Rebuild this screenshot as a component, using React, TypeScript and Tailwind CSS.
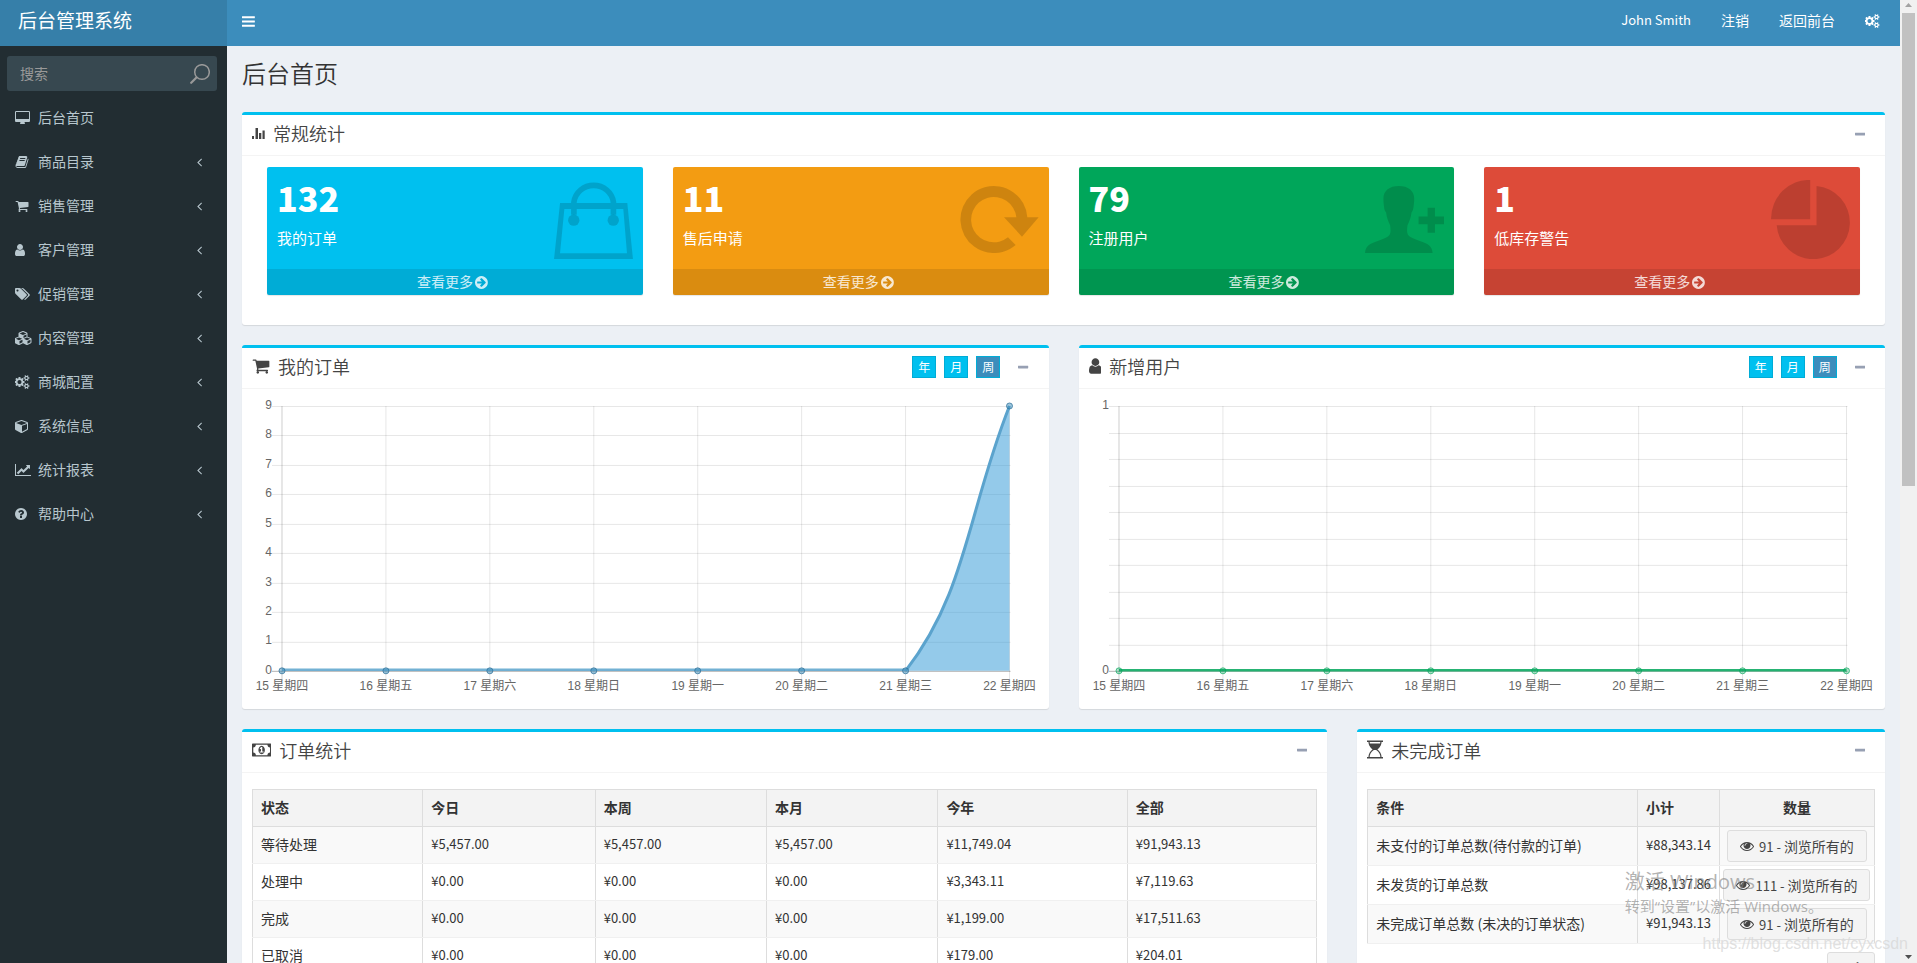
import type { ReactNode } from "react";

const icons = {
  bars: {
    w: 1536,
    d: "M1536 1344v128q0 26-19 45t-45 19h-1408q-26 0-45-19t-19-45v-128q0-26 19-45t45-19h1408q26 0 45 19t19 45zm0-512v128q0 26-19 45t-45 19h-1408q-26 0-45-19t-19-45v-128q0-26 19-45t45-19h1408q26 0 45 19t19 45zm0-512v128q0 26-19 45t-45 19h-1408q-26 0-45-19t-19-45v-128q0-26 19-45t45-19h1408q26 0 45 19t19 45z",
  },
  desktop: {
    w: 1920,
    d: "M1792 992v-832q0-13-9.5-22.5t-22.5-9.5h-1600q-13 0-22.5 9.5t-9.5 22.5v832q0 13 9.5 22.5t22.5 9.5h1600q13 0 22.5-9.5t9.5-22.5zm128-832v1088q0 66-47 113t-113 47h-544q0 37 16 77.5t32 71 16 43.5q0 26-19 45t-45 19h-512q-26 0-45-19t-19-45q0-14 16-44t32-70 16-78h-544q-66 0-113-47t-47-113v-1088q0-66 47-113t113-47h1600q66 0 113 47t47 113z",
  },
  book: {
    w: 1792,
    d: "M1703 478q40 57 18 129l-275 906q-19 64-76.5 107.5t-122.5 43.5h-923q-77 0-148.5-53.5t-99.5-131.5q-24-67-2-127 0-4 3-27t4-37q1-8-3-21.5t-3-19.5q2-11 8-21t16.5-23.5 16.5-23.5q23-38 45-91.5t30-91.5q3-10 .5-30t-.5-28q3-11 17-28t17-23q21-36 42-92t25-90q1-9-2.5-32t.5-28q4-13 22-30.5t22-22.5q19-26 42.5-84.5t27.5-96.5q1-8-3-25.5t-2-26.5q2-8 9-18t18-23 17-21q8-12 16.5-30.5t15-35 16-36 19.5-32 26.5-23.5 36-11.5 47.5 5.5l-1 3q38-9 51-9h761q74 0 114 56t18 130l-274 906q-36 119-71.5 153.5t-128.5 34.5h-869q-27 0-38 15-11 16-1 43 24 70 144 70h923q29 0 56-15.5t35-41.5l300-987q7-22 5-57 38 15 59 43zm-1064 2q-4 13 2 22.5t20 9.5h608q13 0 25.5-9.5t16.5-22.5l21-64q4-13-2-22.5t-20-9.5h-608q-13 0-25.5 9.5t-16.5 22.5zm-83 256q-4 13 2 22.5t20 9.5h608q13 0 25.5-9.5t16.5-22.5l21-64q4-13-2-22.5t-20-9.5h-608q-13 0-25.5 9.5t-16.5 22.5z",
  },
  cart: {
    w: 1792,
    d: "M704 1536q0 52-38 90t-90 38-90-38-38-90 38-90 90-38 90 38 38 90zm896 0q0 52-38 90t-90 38-90-38-38-90 38-90 90-38 90 38 38 90zm128-1088v512q0 24-16.5 42.5t-40.5 21.5l-1044 122q13 60 13 70 0 16-24 64h920q26 0 45 19t19 45-19 45-45 19h-1024q-26 0-45-19t-19-45q0-11 8-31.5t16-36 21.5-40 15.5-29.5l-177-823h-204q-26 0-45-19t-19-45 19-45 45-19h256q16 0 28.5 6.5t19.5 15.5 13 24.5 8 26 5.5 29.5 4.5 26h1201q26 0 45 19t19 45z",
  },
  user: {
    w: 1280,
    d: "M1280 1399q0 109-62.5 187t-150.5 78h-854q-88 0-150.5-78t-62.5-187q0-85 8.5-160.5t31.5-152 58.5-131 94-89 134.5-34.5q131 128 313 128t313-128q76 0 134.5 34.5t94 89 58.5 131 31.5 152 8.5 160.5zm-256-887q0 159-112.5 271.5t-271.5 112.5-271.5-112.5-112.5-271.5 112.5-271.5 271.5-112.5 271.5 112.5 112.5 271.5z",
  },
  tags: {
    w: 1920,
    d: "M448 448q0-53-37.5-90.5t-90.5-37.5-90.5 37.5-37.5 90.5 37.5 90.5 90.5 37.5 90.5-37.5 37.5-90.5zm1067 576q0 53-37 90l-491 492q-39 37-91 37-53 0-90-37l-715-716q-38-37-64.5-101t-26.5-117v-416q0-52 38-90t90-38h416q53 0 117 26.5t102 64.5l715 714q37 39 37 91zm384 0q0 53-37 90l-491 492q-39 37-91 37-36 0-59-14t-53-45l470-470q37-37 37-90 0-52-37-91l-715-714q-38-38-102-64.5t-117-26.5h224q53 0 117 26.5t102 64.5l715 714q37 39 37 91z",
  },
  cubes: {
    w: 2176,
    d: "M576 1632l384-192v-314l-384 164v342zm-64-454l404-173-404-173-404 173zm1088 454l384-192v-314l-384 164v342zm-64-454l404-173-404-173-404 173zm-448-293l384-165v-266l-384 164v267zm-64-379l441-189-441-189-441 189zm1088 518v416q0 36-19 67t-52 47l-448 224q-25 14-57 14t-57-14l-448-224q-4-2-7-4-2 2-7 4l-448 224q-25 14-57 14t-57-14l-448-224q-33-16-52-47t-19-67v-416q0-38 21.500-70t56.500-48l434-186v-400q0-38 21.500-70t56.500-48l448-192q23-10 50-10t50 10l448 192q35 16 56.500 48t21.500 70v400l434 186q36 16 57 48t21 70z",
  },
  cogs: {
    w: 1920,
    d: "M832 896q0-106-75-181t-181-75-181 75-75 181 75 181 181 75 181-75 75-181zm768 512q0-52-38-90t-90-38-90 38-38 90q0 53 37.5 90.5t90.5 37.5 90.5-37.5 37.5-90.5zm0-1024q0-52-38-90t-90-38-90 38-38 90q0 53 37.5 90.5t90.5 37.5 90.5-37.5 37.5-90.5zm-384 421v185q0 10-7 19.5t-16 10.5l-155 24q-11 35-32 76 34 48 90 115 7 11 7 20 0 12-7 19-23 30-82.5 89.5t-78.5 59.5q-11 0-21-7l-115-90q-37 19-77 31-11 108-23 155-7 24-30 24h-186q-11 0-20-7.5t-10-17.5l-23-153q-34-10-75-31l-118 89q-7 7-20 7-11 0-21-8-144-133-144-160 0-9 7-19 10-14 41-53t47-61q-23-44-35-82l-152-24q-10-1-17-9.5t-7-19.5v-185q0-10 7-19.5t16-10.5l155-24q11-35 32-76-34-48-90-115-7-11-7-20 0-12 7-20 22-30 82-89t79-59q11 0 21 7l115 90q34-18 77-32 11-108 23-154 7-24 30-24h186q11 0 20 7.5t10 17.5l23 153q34 10 75 31l118-89q8-7 20-7 11 0 21 8 144 133 144 160 0 8-7 19-12 16-42 54t-45 60q23 48 34 82l152 23q10 2 17 10.5t7 19.5zm640 533v140q0 16-149 31-12 27-30 52 51 113 51 138 0 4-4 7-122 71-124 71-8 0-46-47t-52-68q-20 2-30 2t-30-2q-14 21-52 68t-46 47q-2 0-124-71-4-3-4-7 0-25 51-138-18-25-30-52-149-15-149-31v-140q0-16 149-31 13-29 30-52-51-113-51-138 0-4 4-7 4-2 35-20t59-34 30-16q8 0 46 46.5t52 67.5q20-2 30-2t30 2q51-71 92-112l6-2q4 0 124 70 4 3 4 7 0 25-51 138 17 23 30 52 149 15 149 31zm0-1024v140q0 16-149 31-12 27-30 52 51 113 51 138 0 4-4 7-122 71-124 71-8 0-46-47t-52-68q-20 2-30 2t-30-2q-14 21-52 68t-46 47q-2 0-124-71-4-3-4-7 0-25 51-138-18-25-30-52-149-15-149-31v-140q0-16 149-31 13-29 30-52-51-113-51-138 0-4 4-7 4-2 35-20t59-34 30-16q8 0 46 46.5t52 67.5q20-2 30-2t30 2q51-71 92-112l6-2q4 0 124 70 4 3 4 7 0 25-51 138 17 23 30 52 149 15 149 31z",
  },
  cube: {
    w: 1664,
    d: "M896 1629l640-349v-636l-640 233v752zm-64-865l698-254-698-254-698 254zm832-252v768q0 35-18 65t-49 47l-704 384q-28 16-61 16t-61-16l-704-384q-31-17-49-47t-18-65v-768q0-40 23-73t61-47l704-256q22-8 44-8t44 8l704 256q38 14 61 47t23 73z",
  },
  chart: {
    w: 2048,
    d: "M2048 1536v128h-2048v-1536h128v1408h1920zm-128-1248v435q0 21-19.5 29.5t-35.5-7.5l-121-121-633 633q-10 10-23 10t-23-10l-233-233-416 416-192-192 585-585q10-10 23-10t23 10l233 233 464-464-121-121q-16-16-7.5-35.5t29.5-19.5h435q14 0 23 9t9 23z",
  },
  help: {
    w: 1536,
    d: "M896 1376v-192q0-14-9-23t-23-9h-192q-14 0-23 9t-9 23v192q0 14 9 23t23 9h192q14 0 23-9t9-23zm256-672q0-88-55.5-163t-138.500-116-170-41q-243 0-371 213-15 24 8 42l132 100q7 6 19 6 16 0 25-12 53-68 86-92 34-24 86-24 48 0 85.500 26t37.500 59q0 38-20 61t-68 45q-63 28-115.500 86.500t-52.500 125.500v36q0 14 9 23t23 9h192q14 0 23-9t9-23q0-19 21.500-49.500t54.500-49.500q32-18 49-28.500t46-35 44.500-48 28-60.500 12.500-81zm384 192q0 209-103 385.500t-279.500 279.500-385.500 103-385.500-103-279.500-279.500-103-385.500 103-385.500 279.500-279.500 385.500-103 385.500 103 279.500 279.500 103 385.500z",
  },
  angle: {
    w: 640,
    d: "M627 544q0 13-10 23l-393 393 393 393q10 10 10 23t-10 23l-50 50q-10 10-23 10t-23-10l-466-466q-10-10-10-23t10-23l466-466q10-10 23-10t23 10l50 50q10 10 10 23z",
  },
  arrow: {
    w: 1536,
    d: "M1285 896q0-27-18-45l-362-362-91-91q-18-18-45-18t-45 18l-91 91q-18 18-18 45t18 45l189 189h-502q-26 0-45 19t-19 45v128q0 26 19 45t45 19h502l-189 189q-19 19-19 45t19 45l91 91q18 18 45 18t45-18l362-362 91-91q18-18 18-45zm251 0q0 209-103 385.500t-279.500 279.500-385.500 103-385.500-103-279.500-279.500-103-385.500 103-385.500 279.500-279.500 385.500-103 385.500 103 279.500 279.500 103 385.500z",
  },
  eye: {
    w: 1792,
    d: "M1664 960q-152-236-381-353 61 104 61 225 0 185-131.5 316.5t-316.5 131.5-316.5-131.5-131.5-316.5q0-121 61-225-229 117-381 353 133 205 333.5 326.5t434.5 121.5 434.5-121.5 333.5-326.5zm-720-384q0-20-14-34t-34-14q-125 0-214.5 89.5t-89.5 214.5q0 20 14 34t34 14 34-14 14-34q0-86 61-147t147-61q20 0 34-14t14-34zm848 384q0 34-20 69-140 230-376.5 368.5t-499.5 138.5-499.5-139-376.5-368q-20-35-20-69t20-69q140-229 376.5-368t499.5-139 499.5 139 376.5 368q20 35 20 69z",
  },
  minus: {
    w: 1408,
    d: "M1408 736v192q0 40-28 68t-68 28h-1216q-40 0-68-28t-28-68v-192q0-40 28-68t68-28h1216q40 0 68 28t28 68z",
  },
  money: {
    w: 1920,
    d: "M768 1152h384v-96h-128v-448h-114l-148 137 77 80q42-37 55-57h2v288h-128v96zm512-256q0 70-21 142t-59.5 134-101.5 101-138 39-138-39-101.5-101-59.5-134-21-142 21-142 59.5-134 101.5-101 138-39 138 39 101.5 101 59.5 134 21 142zm512 256v-512q-106 0-181-75t-75-181h-1152q0 106-75 181t-181 75v512q106 0 181 75t75 181h1152q0-106 75-181t181-75zm128-832v1152q0 26-19 45t-45 19h-1792q-26 0-45-19t-19-45v-1152q0-26 19-45t45-19h1792q26 0 45 19t19 45z",
  },
};

type IconName = keyof typeof icons;

function Icon({ name, className = "h-[14px]" }: { name: IconName; className?: string }) {
  const { w, d } = icons[name];
  return (
    <svg viewBox={`0 0 ${w} 1792`} className={`w-auto shrink-0 ${className}`} fill="currentColor" aria-hidden="true">
      <path d={d} />
    </svg>
  );
}

function BarsIcon() {
  return (
    <svg viewBox="0 0 13 12" className="h-3 w-[13px]" fill="currentColor" aria-hidden="true">
      <path d="M0 9h2v3H0zM3.500 1h2.500v11H3.500zM7 6h2.300v6H7zM10.500 3.500h2.200v8.500h-2.200z" />
    </svg>
  );
}

function HourglassIcon() {
  return (
    <svg viewBox="0 0 16 19" className="h-[19px] w-4" fill="none" stroke="currentColor" aria-hidden="true">
      <path d="M0 1.200h16M0 17.800h16" strokeWidth="1.600" />
      <path d="M2 1.500c0 4 2.300 6.300 4.500 8C4.300 11 2 13.500 2 17.500M14 1.500c0 4-2.300 6.300-4.500 8 2.200 1.500 4.500 4 4.500 8" strokeWidth="1.200" />
      <path d="M2.300 3.500h11.400c-.5 3.200-2.300 5-4.500 6.500H6.800c-2.200-1.500-4-3.300-4.500-6.500z" fill="currentColor" stroke="none" />
    </svg>
  );
}

function BagIcon() {
  return (
    <svg viewBox="972 240 236 237" className="w-[79px]" aria-hidden="true">
      <path fill="currentColor" fillRule="evenodd" d="M990 309h201l17 168H972zM1003 327l-13 132h200l-11-132z" />
      <path fill="none" stroke="currentColor" strokeWidth="17" d="M1031.500 309v-3a59.500 57.500 0 0 1 118 0v3M1031.500 327v17M1149.500 327v17" />
      <circle cx="1031" cy="360" r="17" fill="currentColor" />
      <circle cx="1149" cy="360" r="17" fill="currentColor" />
    </svg>
  );
}

function RefreshIcon() {
  return (
    <svg viewBox="899 107 237 203" className="w-[79px]" aria-hidden="true">
      <path fill="currentColor" d="M1101 201h34l-50 58-54-58h37A68 68 0 1 0 1043 261L1066 284A100.500 100.500 0 1 1 1101 201z" />
    </svg>
  );
}

function PersonAddIcon() {
  return (
    <svg viewBox="917 106 236 203" className="w-[79px]" fill="currentColor" aria-hidden="true">
      <path d="M1018 106c28 0 46 14 46 38 0 10-1 16-2 25-1 6-2 12-6 16-2 16-6 26-12 38-1 10-3 20 1 28 5 9 20 13 36 19 24 9 38 14 38 39H917c0-25 14-30 38-39 16-6 31-10 36-19 4-8 2-18 1-28-6-12-10-22-12-38-4-4-6-10-6-16-1-9-2-15-2-25 0-24 18-38 46-38z" />
      <path d="M1104 171h22v26h27v23h-27v26h-22v-26h-27v-23h27z" />
    </svg>
  );
}

function PieIcon() {
  return (
    <svg viewBox="875 540 236 237" className="w-[79px]" fill="currentColor" aria-hidden="true">
      <path d="M992 540v117H875A112 117 0 0 1 992 540z" />
      <path d="M1011 558A109.500 109.500 0 1 1 892 675h119z" />
    </svg>
  );
}

const menu: { icon: IconName; label: string }[] = [
  { icon: "desktop", label: "后台首页" },
  { icon: "book", label: "商品目录" },
  { icon: "cart", label: "销售管理" },
  { icon: "user", label: "客户管理" },
  { icon: "tags", label: "促销管理" },
  { icon: "cubes", label: "内容管理" },
  { icon: "cogs", label: "商城配置" },
  { icon: "cube", label: "系统信息" },
  { icon: "chart", label: "统计报表" },
  { icon: "help", label: "帮助中心" },
];

function Sidebar() {
  return (
    <aside className="flex w-[227px] shrink-0 flex-col bg-[#222d32] text-[#b8c7ce]">
      <a href="#" className="flex h-[46px] shrink-0 items-center bg-[#367fa9] px-[18px] pb-[6px] text-[19px] text-white">
        后台管理系统
      </a>
      <form className="mt-[10px] mr-[10px] ml-[7px] flex h-[35px] shrink-0 items-center rounded-[3px] bg-[#374850] pr-[7px]">
        <input
          type="text"
          aria-label="搜索"
          placeholder="搜索"
          className="h-full min-w-0 flex-1 bg-transparent px-[13px] pb-[2px] text-sm outline-none placeholder:text-[#999]"
        />
        <button type="button" aria-label="搜索" className="text-[#999]">
          <svg viewBox="0 0 20 20" className="size-5" fill="none" stroke="currentColor" aria-hidden="true">
            <circle cx="12" cy="8" r="7.300" strokeWidth="1.500" />
            <path d="M6.500 13.500L1.200 18.800" strokeWidth="2.200" strokeLinecap="round" />
          </svg>
        </button>
      </form>
      <nav className="mt-[5px]">
        <ul>
          {menu.map((item, i) => (
            <li key={item.label}>
              <a href="#" className="flex h-11 items-center pr-[25px] pl-[15px] text-sm">
                <span className="flex w-[23px] shrink-0">
                  <Icon name={item.icon} />
                </span>
                <span className="flex-1 pb-[2px]">{item.label}</span>
                {i > 0 && <Icon name="angle" />}
              </a>
            </li>
          ))}
        </ul>
      </nav>
    </aside>
  );
}

function Panel({ icon, title, tools, children }: { icon: ReactNode; title: string; tools?: ReactNode; children: ReactNode }) {
  return (
    <section className="rounded-[3px] border-t-[3px] border-[#00c0ef] bg-white shadow-[0_1px_1px_rgba(0,0,0,0.1)]">
      <header className="flex h-[41px] items-center justify-between border-b border-[#f4f4f4] px-[10px] text-[#444]">
        <h3 className="flex items-center gap-2 pb-1 text-lg leading-5 font-[350]">
          {icon}
          {title}
        </h3>
        <div className="flex items-center gap-2 pb-[2px]">
          {tools}
          <button type="button" aria-label="收起" className="px-[10px] text-[#97a0b3]">
            <Icon name="minus" className="h-[13px]" />
          </button>
        </div>
      </header>
      {children}
    </section>
  );
}

const stats = [
  { value: "132", label: "我的订单", color: "bg-[#00c0ef]", icon: <BagIcon /> },
  { value: "11", label: "售后申请", color: "bg-[#f39c12]", icon: <RefreshIcon /> },
  { value: "79", label: "注册用户", color: "bg-[#00a65a]", icon: <PersonAddIcon /> },
  { value: "1", label: "低库存警告", color: "bg-[#dd4b39]", icon: <PieIcon /> },
];

function StatCards() {
  return (
    <div className="grid grid-cols-4 gap-[30px] px-[25px] pt-[11px] pb-[30px]">
      {stats.map((s) => (
        <div key={s.label} className={`overflow-hidden rounded-[2px] text-white shadow-[0_1px_1px_rgba(0,0,0,0.1)] ${s.color}`}>
          <div className="flex h-[102px] items-center justify-between px-[10px]">
            <div className="pb-2">
              <p className="text-[34px] leading-[38px] font-extrabold">{s.value}</p>
              <p className="mt-[10px] text-[15px] leading-[22px]">{s.label}</p>
            </div>
            <div className="pt-[3px] text-black/15">{s.icon}</div>
          </div>
          <a href="#" className="flex h-[26px] items-center justify-center gap-[2px] bg-black/10 pr-[5px] text-sm text-white/80">
            <span className="pb-[2px]">查看更多</span>
            <Icon name="arrow" className="h-[15px]" />
          </a>
        </div>
      ))}
    </div>
  );
}

function Periods() {
  return (
    <>
      {["年", "月", "周"].map((p) => (
        <button
          key={p}
          type="button"
          aria-pressed={p === "周"}
          className={`h-[22px] w-6 border border-[#00acd6] text-xs leading-4 text-white ${p === "周" ? "bg-[#3c8dbc]" : "bg-[#00c0ef]"}`}
        >
          {p}
        </button>
      ))}
    </>
  );
}

const days = ["15 星期四", "16 星期五", "17 星期六", "18 星期日", "19 星期一", "20 星期二", "21 星期三", "22 星期四"];
const left = 40;
const top = 7;
const bottom = 272;
const step = 104;
const dayX = (i: number) => left + i * step;

function Chart({
  label,
  divisions,
  ticks,
  children,
}: {
  label: string;
  divisions: number;
  ticks: number[];
  children: ReactNode;
}) {
  const rowY = (i: number) => bottom - ((bottom - top) * i) / divisions;
  return (
    <div className="p-[10px]">
      <svg viewBox="10 0 787 300" className="block w-full font-['Liberation_Sans','Noto_Sans_CJK_SC',sans-serif]" role="img" aria-label={label}>
        {Array.from({ length: divisions + 1 }, (_, i) => (
          <path
            key={i}
            d={`M${left - 10} ${Math.round(rowY(i)) + 0.5}H${dayX(7) + 1}`}
            stroke="#000"
            strokeOpacity={i === 0 ? 0.3 : 0.1}
          />
        ))}
        {days.map((d, i) => (
          <g key={d}>
            <path d={`M${dayX(i)} ${top}V${bottom + 10}`} stroke="#000" strokeOpacity={i === 0 ? 0.2 : 0.1} />
            <text x={dayX(i)} y={bottom + 19} fontSize="12" fill="#666" textAnchor="middle">
              {d}
            </text>
          </g>
        ))}
        {ticks.map((t) => (
          <text key={t} x={left - 10} y={rowY(ticks.length === 2 ? t * divisions : t) + 3} fontSize="12" fill="#666" textAnchor="end">
            {t}
          </text>
        ))}
        {children}
      </svg>
    </div>
  );
}

function OrdersChart() {
  const curve = `M${dayX(6)} ${bottom}C${dayX(6) + 61} 194 ${dayX(7) - 42} 113 ${dayX(7)} ${top}`;
  return (
    <Chart label="我的订单" divisions={9} ticks={[0, 1, 2, 3, 4, 5, 6, 7, 8, 9]}>
      <path d={`${curve}V${bottom}Z`} fill="#2a95d5" fillOpacity="0.5" />
      <path d={`M${dayX(0)} ${bottom - 1}H${dayX(6)}`} stroke="#5ba3cd" strokeWidth="2.500" strokeOpacity="0.85" />
      <path d={curve} fill="none" stroke="#5ba3cd" strokeWidth="3" />
      {days.map((d, i) => (
        <circle key={d} cx={dayX(i)} cy={i === 7 ? top : bottom} r="3" fill="#3c8dbc" fillOpacity="0.5" stroke="#2f7199" strokeOpacity="0.75" />
      ))}
    </Chart>
  );
}

function UsersChart() {
  return (
    <Chart label="新增用户" divisions={10} ticks={[0, 1]}>
      <path d={`M${dayX(0)} ${bottom - 0.5}H${dayX(7)}`} stroke="#00a65a" strokeWidth="2.500" strokeOpacity="0.85" />
      {days.map((d, i) => (
        <circle key={d} cx={dayX(i)} cy={bottom} r="3" fill="#00a65a" fillOpacity="0.3" stroke="#00a65a" strokeOpacity="0.65" />
      ))}
    </Chart>
  );
}

const orderRows = [
  ["等待处理", "¥5,457.00", "¥5,457.00", "¥5,457.00", "¥11,749.04", "¥91,943.13"],
  ["处理中", "¥0.00", "¥0.00", "¥0.00", "¥3,343.11", "¥7,119.63"],
  ["完成", "¥0.00", "¥0.00", "¥0.00", "¥1,199.00", "¥17,511.63"],
  ["已取消", "¥0.00", "¥0.00", "¥0.00", "¥179.00", "¥204.01"],
];

const tableClass = "w-full border-collapse border border-[#ddd] text-left text-sm leading-5 text-[#333]";
const headClass = "h-[37px] border border-[#ddd] px-2 pt-0 pb-px font-bold";
const cellClass = "border-x border-y border-x-[#ddd] border-y-[#f0f0f0] px-2 pt-0 pb-px";

function OrderTable() {
  return (
    <div className="px-[10px] pt-4 pb-[10px]">
      <table className={`${tableClass} table-fixed`}>
        <colgroup>
          <col className="w-[16%]" />
          <col className="w-[16.200%]" />
          <col className="w-[16.100%]" />
          <col className="w-[16.100%]" />
          <col className="w-[17.800%]" />
          <col />
        </colgroup>
        <thead>
          <tr className="bg-[#f3f3f3]">
            {["状态", "今日", "本周", "本月", "今年", "全部"].map((h) => (
              <th key={h} scope="col" className={headClass}>
                {h}
              </th>
            ))}
          </tr>
        </thead>
        <tbody>
          {orderRows.map((row) => (
            <tr key={row[0]} className="h-[37px] odd:bg-[#f9f9f9]">
              {row.map((cell, i) => (
                <td key={i} className={`${cellClass} ${i ? "text-[13px]" : ""}`}>
                  {cell}
                </td>
              ))}
            </tr>
          ))}
        </tbody>
      </table>
    </div>
  );
}

const openRows = [
  { label: "未支付的订单总数(待付款的订单)", total: "¥88,343.14", count: 91 },
  { label: "未发货的订单总数", total: "¥98,137.86", count: 111 },
  { label: "未完成订单总数 (未决的订单状态)", total: "¥91,943.13", count: 91 },
];

function OpenOrders() {
  return (
    <div className="px-[10px] pt-4 pb-[10px]">
      <table className={tableClass}>
        <thead>
          <tr className="bg-[#f3f3f3]">
            <th scope="col" className={headClass}>
              条件
            </th>
            <th scope="col" className={`${headClass} w-20`}>
              小计
            </th>
            <th scope="col" className={`${headClass} w-[155px] text-center`}>
              数量
            </th>
          </tr>
        </thead>
        <tbody>
          {openRows.map((r) => (
            <tr key={r.label} className="h-[39px] odd:bg-[#f9f9f9]">
              <td className={cellClass}>{r.label}</td>
              <td className={`${cellClass} text-[13px]`}>{r.total}</td>
              <td className="border border-x-[#ddd] border-y-[#f0f0f0] p-0">
                <button
                  type="button"
                  className="mx-auto flex h-8 items-center gap-[5px] rounded-[3px] border border-[#ddd] bg-[#f4f4f4] px-3 text-sm whitespace-nowrap text-[#444]"
                >
                  <Icon name="eye" />
                  <span>
                    <span className="text-[13px]">{r.count} - </span>浏览所有的
                  </span>
                </button>
              </td>
            </tr>
          ))}
        </tbody>
      </table>
      <div className="mt-2 flex justify-end">
        <button type="button" className="h-8 w-12 rounded-[3px] border border-[#ddd] bg-[#f4f4f4] text-sm text-[#444]">
          更多
        </button>
      </div>
    </div>
  );
}

function ScrollTrack() {
  return (
    <div className="flex w-[17px] shrink-0 flex-col items-center bg-[#f1f1f1] pt-[3px] pb-1" aria-hidden="true">
      <svg viewBox="0 0 7 4" className="mb-[6px] h-1 w-[7px] shrink-0">
        <path d="M0 4L3.500 0 7 4z" fill="#a3a3a3" />
      </svg>
      <div className="h-[473px] w-[13px] bg-[#c1c1c1]" />
      <svg viewBox="0 0 7 4" className="mt-auto h-1 w-[7px] shrink-0">
        <path d="M0 0L3.500 4 7 0z" fill="#505050" />
      </svg>
    </div>
  );
}

export default function App() {
  return (
    <div className="relative flex h-screen overflow-hidden bg-[#ecf0f5] font-['Noto_Sans_CJK_SC',sans-serif] text-[#333]">
      <Sidebar />
      <div className="flex min-w-0 flex-1 flex-col">
        <header className="flex h-[46px] shrink-0 items-center justify-between bg-[#3c8dbc] pr-5 pb-1 pl-[15px] text-sm text-white">
          <button type="button" aria-label="切换导航">
            <Icon name="bars" className="h-[15px]" />
          </button>
          <nav className="flex items-center gap-[30px]">
            <a href="#" className="pb-[2px] text-[13px]">
              John Smith
            </a>
            <a href="#" className="pb-[2px]">
              注销
            </a>
            <a href="#" className="pb-[2px]">
              返回前台
            </a>
            <a href="#" aria-label="设置">
              <Icon name="cogs" />
            </a>
          </nav>
        </header>
        <main className="min-h-0 flex-1 overflow-hidden px-[15px]">
          <h1 className="mt-3 mb-6 text-2xl leading-[30px] font-[350]">后台首页</h1>
          <div className="flex flex-col gap-5">
            <Panel icon={<BarsIcon />} title="常规统计">
              <StatCards />
            </Panel>
            <div className="grid grid-cols-2 gap-[30px]">
              <Panel icon={<Icon name="cart" className="h-[18px]" />} title="我的订单" tools={<Periods />}>
                <OrdersChart />
              </Panel>
              <Panel icon={<Icon name="user" className="h-[18px]" />} title="新增用户" tools={<Periods />}>
                <UsersChart />
              </Panel>
            </div>
            <div className="grid grid-cols-12 items-start gap-[30px]">
              <div className="col-span-8">
                <Panel icon={<Icon name="money" className="h-[18px]" />} title="订单统计">
                  <OrderTable />
                </Panel>
              </div>
              <div className="col-span-4">
                <Panel icon={<HourglassIcon />} title="未完成订单">
                  <OpenOrders />
                </Panel>
              </div>
            </div>
          </div>
        </main>
      </div>
      <ScrollTrack />
      <div className="pointer-events-none absolute right-[94px] bottom-[45px] font-['Open_Sans','Noto_Sans_CJK_SC',sans-serif] text-[#808080]/60">
        <p className="text-xl leading-6">激活 Windows</p>
        <p className="text-[15px] leading-6">转到“设置”以激活 Windows。</p>
      </div>
      <p className="pointer-events-none absolute right-[9px] bottom-[9px] font-['Liberation_Sans',sans-serif] text-base leading-5 text-[#d8d8d8]/80">
        https://blog.csdn.net/cyxcsdn
      </p>
    </div>
  );
}
